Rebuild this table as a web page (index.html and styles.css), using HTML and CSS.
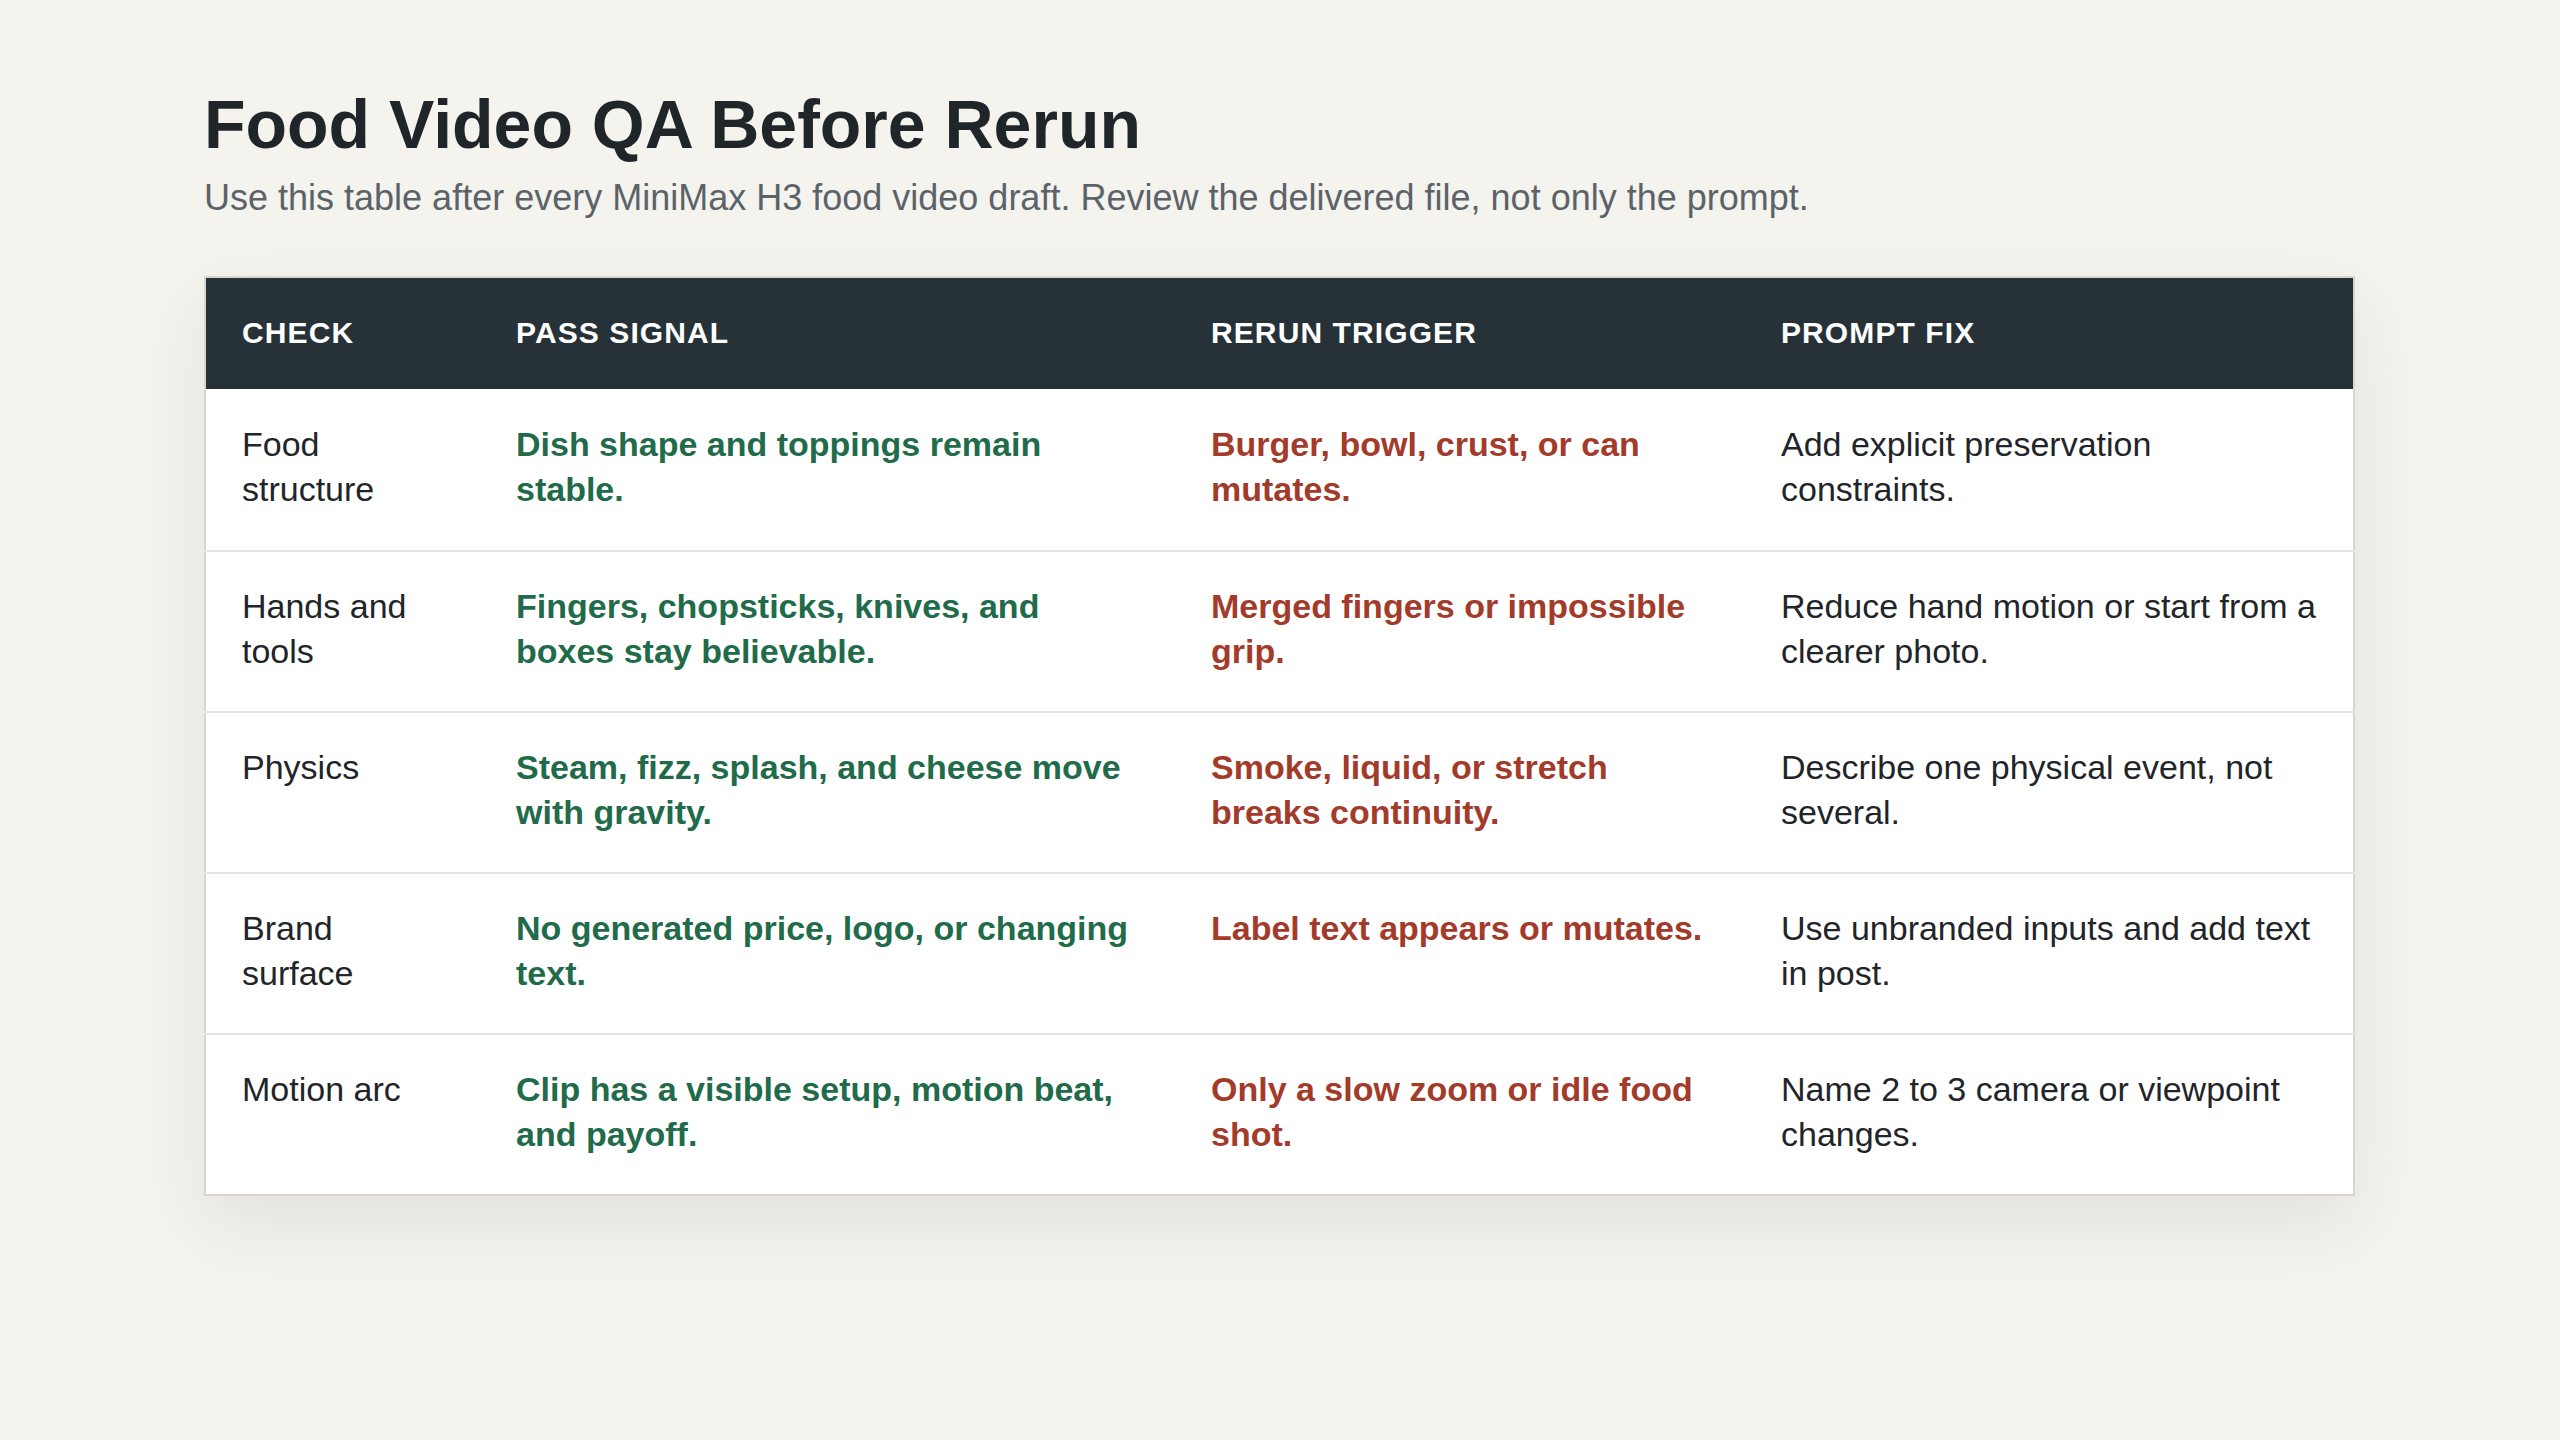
FILE: index.html
```html
<!DOCTYPE html>
<html lang="en">
<head>
<meta charset="utf-8">
<title>Food Video QA Before Rerun</title>
<link rel="stylesheet" href="styles.css">
</head>
<body>
<main class="page">
  <header class="intro">
    <h1 class="title">Food Video QA Before Rerun</h1>
    <p class="subtitle">Use this table after every MiniMax H3 food video draft. Review the delivered file, not only the prompt.</p>
  </header>
  <table class="qa">
    <colgroup>
      <col class="c-check">
      <col class="c-pass">
      <col class="c-rerun">
      <col class="c-fix">
    </colgroup>
    <thead>
      <tr>
        <th>Check</th>
        <th>Pass signal</th>
        <th>Rerun trigger</th>
        <th>Prompt fix</th>
      </tr>
    </thead>
    <tbody>
      <tr>
        <td>Food structure</td>
        <td class="pass">Dish shape and toppings remain stable.</td>
        <td class="rerun">Burger, bowl, crust, or can mutates.</td>
        <td>Add explicit preservation constraints.</td>
      </tr>
      <tr>
        <td>Hands and tools</td>
        <td class="pass">Fingers, chopsticks, knives, and boxes stay believable.</td>
        <td class="rerun">Merged fingers or impossible grip.</td>
        <td>Reduce hand motion or start from a clearer photo.</td>
      </tr>
      <tr>
        <td>Physics</td>
        <td class="pass">Steam, fizz, splash, and cheese move with gravity.</td>
        <td class="rerun">Smoke, liquid, or stretch breaks continuity.</td>
        <td>Describe one physical event, not several.</td>
      </tr>
      <tr>
        <td>Brand surface</td>
        <td class="pass">No generated price, logo, or changing text.</td>
        <td class="rerun">Label text appears or mutates.</td>
        <td>Use unbranded inputs and add text in post.</td>
      </tr>
      <tr>
        <td>Motion arc</td>
        <td class="pass">Clip has a visible setup, motion beat, and payoff.</td>
        <td class="rerun">Only a slow zoom or idle food shot.</td>
        <td>Name 2 to 3 camera or viewpoint changes.</td>
      </tr>
    </tbody>
  </table>
</main>
</body>
</html>
```

FILE: styles.css
```css
html, body {
  margin: 0;
  padding: 0;
}

body {
  background: #f4f3ee;
  color: #1f2529;
  font-family: "Liberation Sans", Arial, sans-serif;
  min-height: 1440px;
}

.page {
  padding: 87px 205px 120px 204px;
}

.intro {
  margin-bottom: 53px;
}

.title {
  margin: 0 0 11px;
  font-size: 68px;
  line-height: 1.1;
  font-weight: 700;
  color: #1f2529;
}

.subtitle {
  margin: 0;
  font-size: 36px;
  line-height: 1.4;
  color: #5b6369;
}

.qa {
  width: 100%;
  table-layout: fixed;
  border-collapse: collapse;
  background: #ffffff;
  border: 2px solid #dad5cc;
  box-shadow: 0 28px 70px rgba(60, 50, 30, 0.09);
}

.c-check { width: 275px; }
.c-pass { width: 695px; }
.c-rerun { width: 570px; }

.qa th {
  background: #263238;
  color: #ffffff;
  text-align: left;
  font-size: 30px;
  line-height: 39px;
  font-weight: 700;
  text-transform: uppercase;
  letter-spacing: 1.1px;
  padding: 35px 36px 37px 36px;
}

.qa td {
  vertical-align: top;
  font-size: 34px;
  line-height: 45px;
  padding: 32px 36px 37px 36px;
  border-top: 2px solid #e8e4dc;
  color: #1f2529;
}

.qa tbody tr:first-child td {
  border-top: none;
  padding-top: 33px;
  padding-bottom: 38px;
}

.qa td.pass {
  color: #1f6b4a;
  font-weight: 700;
}

.qa td.rerun {
  color: #a33b2b;
  font-weight: 700;
}
```
